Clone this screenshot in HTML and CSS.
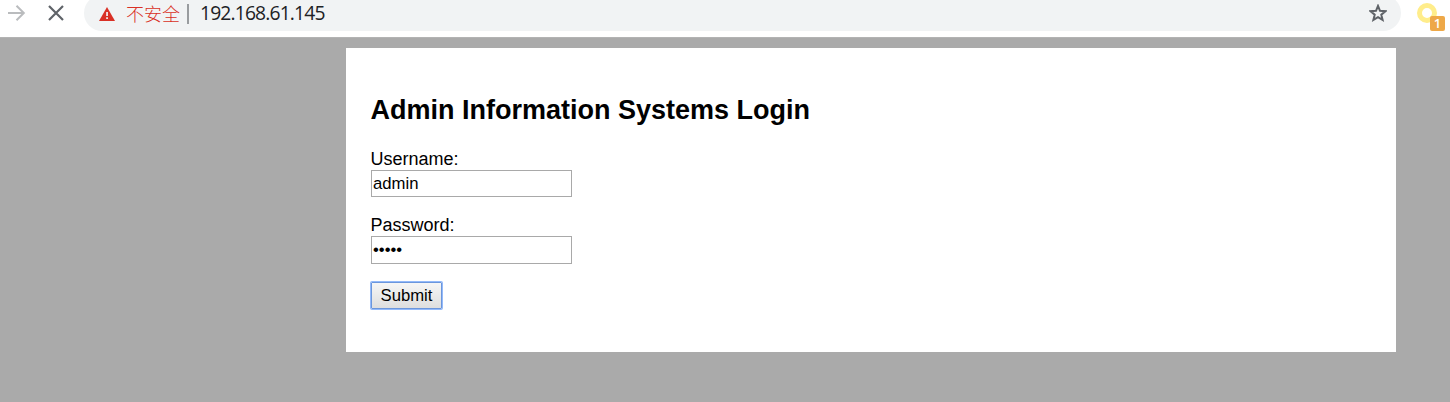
FILE: index.html
```
<!DOCTYPE html>
<html lang="en">
<head>
<meta charset="utf-8">
<title>Admin Information Systems Login</title>
<link rel="stylesheet" href="styles.css">
</head>
<body>
<header class="toolbar">
  <svg class="forward" width="20" height="20" viewBox="0 0 20 20"><path d="M1 10H16.500M9.500 2.800L16.800 10L9.500 17.200"/></svg>
  <svg class="stop" width="18" height="18" viewBox="0 0 18 18"><path d="M2 2L16 16M16 2L2 16"/></svg>
  <div class="address">
    <svg class="warning" width="16" height="14" viewBox="0 0 16 14"><path fill="#d93025" d="M8 0L16 14H0Z"/><path fill="#f1f3f4" d="M7.200 5h1.700v4H7.200zM7.200 10.300h1.700v1.700H7.200z"/></svg>
    <span class="insecure" lang="zh-CN">不安全</span>
    <span class="divider"></span>
    <span class="url">192.168.61.145</span>
    <svg class="star" width="18" height="18" viewBox="0 0 18 18"><path d="M9 1.900L11 6.800L16.400 7.200L12.300 10.700L13.600 15.900L9 13.100L4.400 15.900L5.700 10.700L1.600 7.200L7 6.800Z"/></svg>
  </div>
  <div class="extension"><span class="ring"></span><span class="badge">1</span></div>
</header>
<main class="panel">
  <h1 class="title">Admin Information Systems Login</h1>
  <form class="form">
    <label class="label" for="user">Username:</label>
    <input class="field" id="user" type="text" value="admin">
    <label class="label" for="pass">Password:</label>
    <input class="field field-password" id="pass" type="password" value="admin">
    <button class="submit" type="button">Submit</button>
  </form>
</main>
</body>
</html>
```
FILE: styles.css
```
* { box-sizing: border-box; }
body {
  margin: 0;
  height: 402px;
  overflow: hidden;
  background: #aaa;
  font-family: "Liberation Sans", Arial, sans-serif;
  color: #000;
}
.toolbar {
  display: flex;
  height: 38px;
  background: #fff;
  border-bottom: 1px solid #b3b3b3;
}
.toolbar svg { flex: none; fill: none; }
.forward { margin: 3px 0 0 7px; stroke: #babcbe; stroke-width: 2; }
.stop { margin: 4px 0 0 20px; stroke: #5f6368; stroke-width: 2.200; }
.address {
  display: flex;
  align-items: center;
  width: 1317px;
  height: 36px;
  margin: -5px 0 0 19px;
  padding-left: 15px;
  background: #f1f3f4;
  border-radius: 18px;
  flex: none;
}
.warning { margin-top: 2px; }
.insecure {
  width: 54px;
  margin-left: 11px;
  color: #d93025;
  font: 300 18px/20px "Noto Sans CJK SC", sans-serif;
  white-space: nowrap;
}
.divider { width: 2px; height: 20px; margin: 2px 0 0 7px; background: #999c9f; }
.url {
  margin-left: 11px;
  color: #202124;
  font: 19.300px/24px "Open Sans", "Noto Sans", sans-serif;
  letter-spacing: -.85px;
}
.star { margin: 0 14px 0 auto; stroke: #5f6368; stroke-width: 2; }
.extension { position: relative; width: 30px; margin-left: 16px; }
.ring {
  display: block;
  width: 20px;
  height: 20px;
  margin-top: 3px;
  border: 5px solid #ffed8b;
  border-radius: 50%;
}
.badge {
  position: absolute;
  left: 13px;
  top: 16px;
  width: 15px;
  height: 15px;
  border-radius: 2px;
  background: #eea848;
  color: #fff;
  font: 600 13px/15px "Open Sans", sans-serif;
  text-align: center;
}
.panel {
  width: 1050px;
  height: 304px;
  margin: 10px 0 0 346px;
  padding: 46px 24px 0 25px;
  background: #fff;
}
.title {
  margin: 0 0 0 -.500px;
  font-size: 27px;
  line-height: 32px;
  white-space: nowrap;
}
.form {
  display: flex;
  flex-direction: column;
  align-items: flex-start;
  margin-top: 23px;
}
.label { margin-left: -.500px; font-size: 18px; line-height: 21px; }
.field {
  width: 201px;
  height: 27px;
  margin: 0 0 18px;
  padding: 0 1px;
  border: 1px solid #a9a9a9;
  background: #fff;
  color: #000;
  font: 16.700px "Liberation Sans", Arial, sans-serif;
}
.field-password { height: 28px; }
.submit {
  width: 71px;
  height: 27px;
  padding: 0;
  border: 1px solid #6b96dc;
  border-radius: 1px;
  background: linear-gradient(#f6f6f6, #dedede);
  box-shadow: 0 0 0 1px #94bafa;
  color: #000;
  font: 16.700px "Liberation Sans", Arial, sans-serif;
}
```
